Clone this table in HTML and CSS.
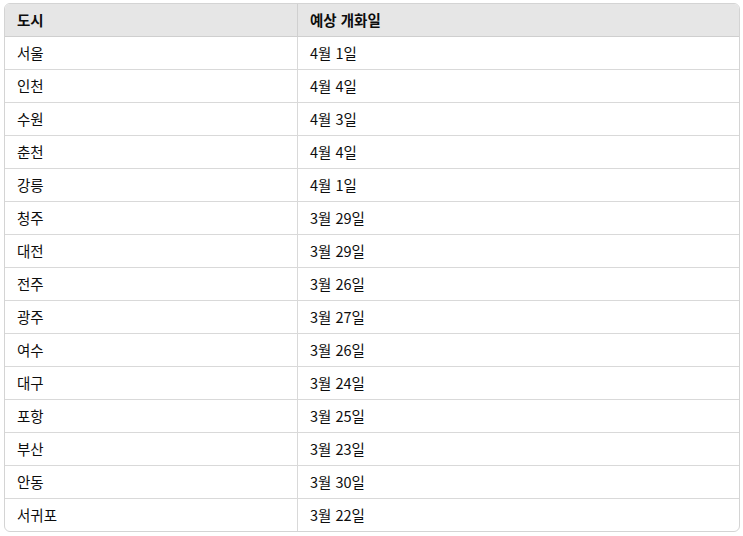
FILE: index.html
```html
<!DOCTYPE html>
<html lang="ko">
<head>
<meta charset="utf-8">
<link rel="stylesheet" href="styles.css">
</head>
<body>
<div class="wrap">
<table class="tbl">
<thead>
<tr><th>도시</th><th>예상 개화일</th></tr>
</thead>
<tbody>
<tr><td>서울</td><td>4월 1일</td></tr>
<tr><td>인천</td><td>4월 4일</td></tr>
<tr><td>수원</td><td>4월 3일</td></tr>
<tr><td>춘천</td><td>4월 4일</td></tr>
<tr><td>강릉</td><td>4월 1일</td></tr>
<tr><td>청주</td><td>3월 29일</td></tr>
<tr><td>대전</td><td>3월 29일</td></tr>
<tr><td>전주</td><td>3월 26일</td></tr>
<tr><td>광주</td><td>3월 27일</td></tr>
<tr><td>여수</td><td>3월 26일</td></tr>
<tr><td>대구</td><td>3월 24일</td></tr>
<tr><td>포항</td><td>3월 25일</td></tr>
<tr><td>부산</td><td>3월 23일</td></tr>
<tr><td>안동</td><td>3월 30일</td></tr>
<tr><td>서귀포</td><td>3월 22일</td></tr>
</tbody>
</table>
</div>
</body>
</html>
```
FILE: styles.css
```css
html, body {
  margin: 0;
  padding: 0;
  background: #ffffff;
}
body {
  font-family: "Noto Sans CJK KR", "Noto Sans", sans-serif;
  font-size: 14.5px;
  color: #0d0d0d;
}
.wrap {
  padding: 3px 3px 0 4px;
}
.tbl {
  width: 736px;
  table-layout: fixed;
  border-collapse: separate;
  border-spacing: 0;
  border: 1px solid #d4d4d4;
  border-radius: 6px;
  overflow: hidden;
}
.tbl th,
.tbl td {
  height: 33px;
  box-sizing: border-box;
  padding: 0 12px 1px 12px;
  text-align: left;
  vertical-align: middle;
  line-height: 18px;
  border-bottom: 1px solid #d9d9d9;
}
.tbl th {
  background: #e6e6e6;
  font-weight: 700;
  border-bottom-color: #cfcfcf;
}
.tbl th:first-child,
.tbl td:first-child {
  width: 293px;
  border-right: 1px solid #d9d9d9;
}
.tbl th:first-child {
  border-right-color: #d0d0d0;
}
.tbl tbody tr:last-child td {
  height: 32px;
  border-bottom: none;
}
```
